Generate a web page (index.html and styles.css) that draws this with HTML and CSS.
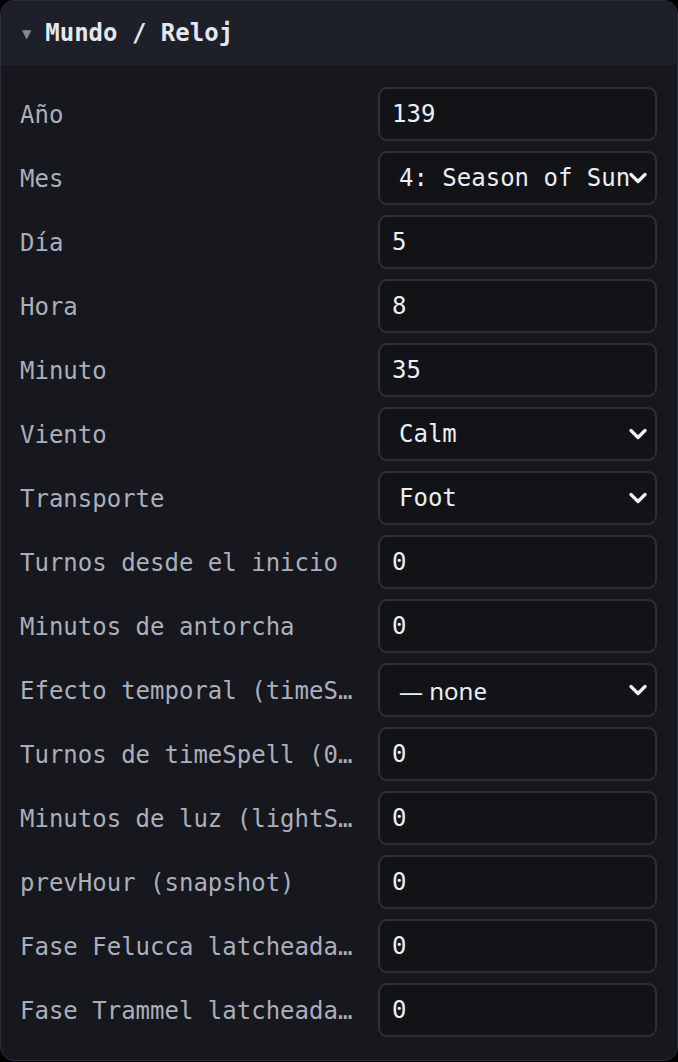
FILE: index.html
```html
<!DOCTYPE html>
<html lang="es">
<head>
<meta charset="utf-8">
<title>Mundo / Reloj</title>
<link rel="stylesheet" href="styles.css">
</head>
<body>
<section class="panel">
  <header class="panel-head">
    <span class="caret">▼</span>
    <span class="title">Mundo / Reloj</span>
  </header>
  <div class="panel-body">
    <label class="row"><span class="lbl">Año</span><input class="field" type="text" value="139"></label>
    <label class="row"><span class="lbl">Mes</span>
      <select class="field sel"><option>4: Season of Sun</option></select></label>
    <label class="row"><span class="lbl">Día</span><input class="field" type="text" value="5"></label>
    <label class="row"><span class="lbl">Hora</span><input class="field" type="text" value="8"></label>
    <label class="row"><span class="lbl">Minuto</span><input class="field" type="text" value="35"></label>
    <label class="row"><span class="lbl">Viento</span>
      <select class="field sel"><option>Calm</option></select></label>
    <label class="row"><span class="lbl">Transporte</span>
      <select class="field sel"><option>Foot</option></select></label>
    <label class="row"><span class="lbl">Turnos desde el inicio</span><input class="field" type="text" value="0"></label>
    <label class="row"><span class="lbl">Minutos de antorcha</span><input class="field" type="text" value="0"></label>
    <label class="row"><span class="lbl">Efecto temporal (timeSpell)</span>
      <select class="field sel sel-sans"><option>— none</option></select></label>
    <label class="row"><span class="lbl">Turnos de timeSpell (0…)</span><input class="field" type="text" value="0"></label>
    <label class="row"><span class="lbl">Minutos de luz (lightSpell)</span><input class="field" type="text" value="0"></label>
    <label class="row"><span class="lbl">prevHour (snapshot)</span><input class="field" type="text" value="0"></label>
    <label class="row"><span class="lbl">Fase Felucca latcheada (snapshot)</span><input class="field" type="text" value="0"></label>
    <label class="row"><span class="lbl">Fase Trammel latcheada (snapshot)</span><input class="field" type="text" value="0"></label>
  </div>
</section>
</body>
</html>
```
FILE: styles.css
```css
html, body {
  margin: 0;
  padding: 0;
  background: #000000;
}
body {
  font-family: "DejaVu Sans Mono", "Liberation Mono", monospace;
  font-size: 24px;
}
.panel {
  box-sizing: border-box;
  width: 678px;
  height: 1061px;
  border: 1px solid #2a2e37;
  border-radius: 14px;
  background: #16181d;
  overflow: hidden;
}
.panel-head {
  height: 64px;
  background: #1d2029;
  display: flex;
  align-items: center;
  padding-left: 21px;
  gap: 14px;
}
.caret {
  font-size: 12px;
  color: #858b96;
  font-family: "DejaVu Sans", sans-serif;
  padding-top: 2px;
}
.title {
  font-weight: bold;
  color: #e4e7ec;
  font-size: 24px;
}
.panel-body {
  display: flex;
  flex-direction: column;
  gap: 10px;
  padding: 22px 20px 20px 19px;
}
.row {
  display: flex;
  align-items: center;
  gap: 22px;
  height: 54px;
}
.lbl {
  flex: 1;
  min-width: 0;
  color: #a9afbb;
  white-space: nowrap;
  overflow: hidden;
  text-overflow: ellipsis;
  padding-top: 2px;
}
.field {
  box-sizing: border-box;
  width: 279px;
  height: 54px;
  flex: none;
  background: #111317;
  border: 2px solid #2b2f38;
  border-radius: 9px;
  color: #eceef1;
  font-family: inherit;
  font-size: 24px;
  padding: 0 12px;
  outline: none;
}
.sel {
  appearance: none;
  -webkit-appearance: none;
  padding: 0 22px 0 19px;
  background-image: url("data:image/svg+xml;utf8,<svg xmlns='http://www.w3.org/2000/svg' width='18' height='12' viewBox='0 0 18 12'><path d='M2 2.5 L9 9.5 L16 2.5' fill='none' stroke='%23f0f2f5' stroke-width='3.2' stroke-linecap='round' stroke-linejoin='round'/></svg>");
  background-repeat: no-repeat;
  background-position: right 8px center;
  background-size: 18px 12px;
}
.sel-sans {
  font-family: "Noto Sans", "Liberation Sans", sans-serif;
}
```
